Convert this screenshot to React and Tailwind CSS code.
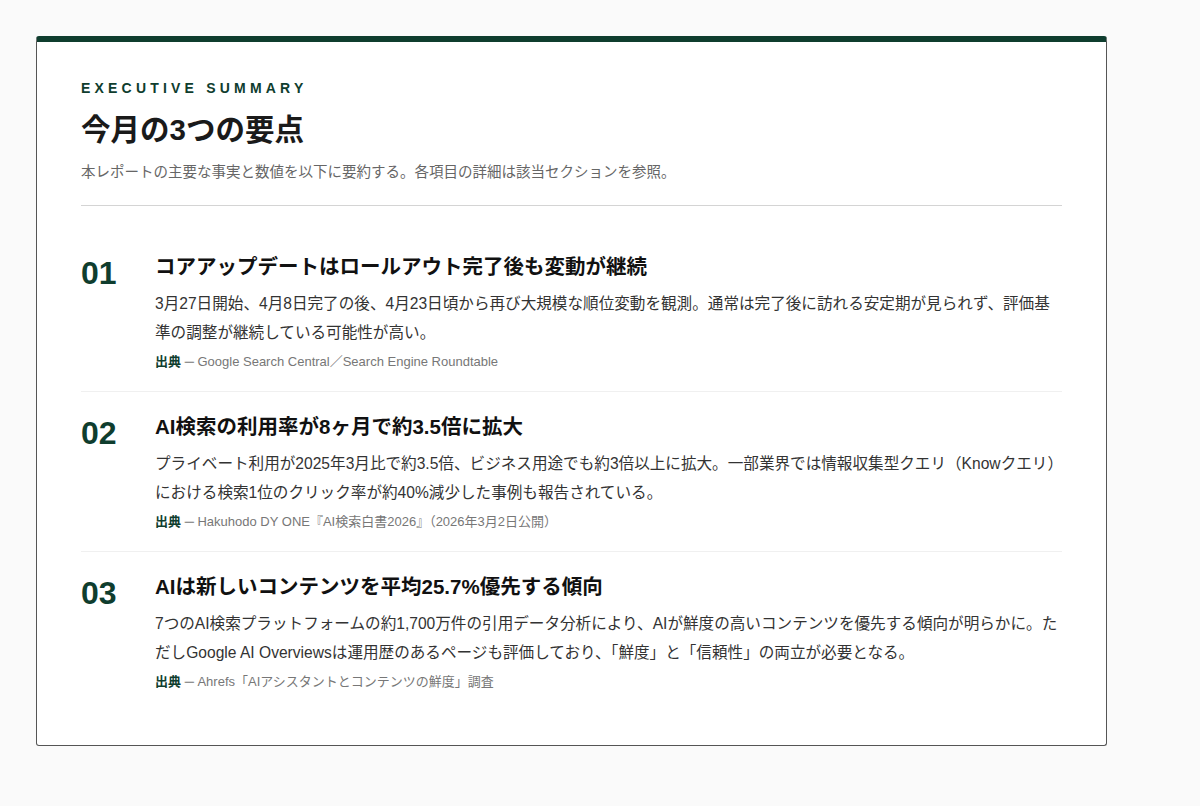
export default function App() {
  const items = [
    {
      n: "01",
      t: "コアアップデートはロールアウト完了後も変動が継続",
      b: "3月27日開始、4月8日完了の後、4月23日頃から再び大規模な順位変動を観測。通常は完了後に訪れる安定期が見られず、評価基準の調整が継続している可能性が高い。",
      s: "Google Search Central／Search Engine Roundtable",
    },
    {
      n: "02",
      t: "AI検索の利用率が8ヶ月で約3.5倍に拡大",
      b: "プライベート利用が2025年3月比で約3.5倍、ビジネス用途でも約3倍以上に拡大。一部業界では情報収集型クエリ（Knowクエリ）における検索1位のクリック率が約40%減少した事例も報告されている。",
      s: "Hakuhodo DY ONE『AI検索白書2026』（2026年3月2日公開）",
    },
    {
      n: "03",
      t: "AIは新しいコンテンツを平均25.7%優先する傾向",
      b: "7つのAI検索プラットフォームの約1,700万件の引用データ分析により、AIが鮮度の高いコンテンツを優先する傾向が明らかに。ただしGoogle AI Overviewsは運用歴のあるページも評価しており、「鮮度」と「信頼性」の両立が必要となる。",
      s: "Ahrefs「AIアシスタントとコンテンツの鮮度」調査",
    },
  ];
  return (
    <div className="min-h-[806px] bg-[#fafafa] pt-[36px] pl-[36px]" style={{ fontFamily: '"Liberation Sans", "Noto Sans CJK JP", sans-serif' }}>
      <div className="w-[1071px] bg-white border border-[#555] border-t-[6px] border-t-[#0f3d2e] rounded-[3px] px-[44px] pt-[36px] pb-[34px]">
        <div className="text-[14px] font-bold tracking-[0.3em] text-[#0f3d2e] leading-[20px]">EXECUTIVE SUMMARY</div>
        <h1 className="mt-[12px] text-[29.5px] font-bold text-[#1a1a1a] leading-[40px]">今月の3つの要点</h1>
        <p className="mt-[12px] text-[14.5px] text-[#666] leading-[20px]">本レポートの主要な事実と数値を以下に要約する。各項目の詳細は該当セクションを参照。</p>
        <div className="mt-[23px] border-t border-[#d4d4d4]"></div>
        <div className="pt-[26px]">
          {items.map((it, i) => (
            <div key={it.n} className={`flex pt-[21px] pb-[19px] ${i < 2 ? "border-b border-[#f0f0f0]" : ""}`}>
              <div className="w-[74px] shrink-0 text-[32px] font-bold text-[#0f3d2e] leading-[36px] pt-[2px]">{it.n}</div>
              <div className="flex-1">
                <div className="text-[20.5px] font-bold text-[#111] leading-[28px]">{it.t}</div>
                <p className="mt-[8px] text-[15.6px] text-[#333] leading-[29px]">{it.b}</p>
                <div className="mt-[5px] text-[13px] leading-[20px] text-[#777]">
                  <span className="font-bold text-[#0f3d2e]">出典</span> ─ {it.s}
                </div>
              </div>
            </div>
          ))}
        </div>
      </div>
    </div>
  );
}
